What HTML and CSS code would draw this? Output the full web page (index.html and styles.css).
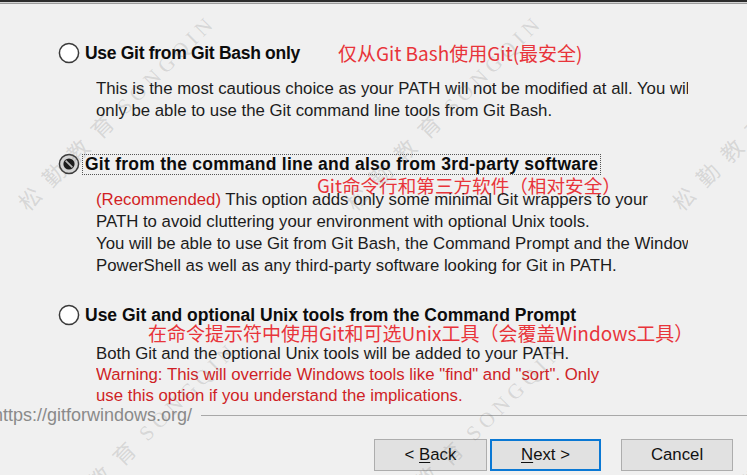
FILE: index.html
```html
<!DOCTYPE html>
<html lang="en">
<head>
<meta charset="utf-8">
<title>Git Setup - Adjusting your PATH environment</title>
<link rel="stylesheet" href="styles.css">
</head>
<body>
<div class="edge"></div>
<main class="content">
  <section class="option first">
    <div class="opt-head">
      <svg class="radio" width="22" height="22" viewBox="0 0 22 22"><circle cx="11" cy="11" r="9.6" fill="#fff" stroke="#3a3a3a" stroke-width="1.5"/></svg>
      <span class="label l1">Use Git from Git Bash only</span>
      <span class="note inline-note">仅从Git Bash使用Git(最安全)</span>
    </div>
    <div class="desc d1">
      <div class="line">This is the most cautious choice as your PATH will not be modified at all. You will</div>
      <div class="line">only be able to use the Git command line tools from Git Bash.</div>
    </div>
  </section>

  <section class="option second">
    <div class="opt-head">
      <svg class="radio" width="22" height="22" viewBox="0 0 22 22"><circle cx="11" cy="11" r="9.6" fill="#d4d4d4" stroke="#3a3a3a" stroke-width="1.5"/><circle cx="11" cy="11" r="5.6" fill="#1c1c1c"/><line x1="7.6" y1="7.6" x2="14.4" y2="14.4" stroke="#b8b8b8" stroke-width="1.7"/></svg>
      <span class="label l2 focused">Git from the command line and also from 3rd-party software</span>
    </div>
    <div class="note block-note n2">Git命令行和第三方软件（相对安全）</div>
    <div class="desc d2">
      <div class="line"><span class="rec">(Recommended)</span> This option adds only some minimal Git wrappers to your</div>
      <div class="line">PATH to avoid cluttering your environment with optional Unix tools.</div>
      <div class="line">You will be able to use Git from Git Bash, the Command Prompt and the Windows</div>
      <div class="line">PowerShell as well as any third-party software looking for Git in PATH.</div>
    </div>
  </section>

  <section class="option third">
    <div class="opt-head">
      <svg class="radio" width="22" height="22" viewBox="0 0 22 22"><circle cx="11" cy="11" r="9.6" fill="#fff" stroke="#3a3a3a" stroke-width="1.5"/></svg>
      <span class="label">Use Git and optional Unix tools from the Command Prompt</span>
    </div>
    <div class="note block-note n3">在命令提示符中使用Git和可选Unix工具（会覆盖Windows工具）</div>
    <div class="desc d3">
      <div class="line">Both Git and the optional Unix tools will be added to your PATH.</div>
      <div class="line warn">Warning: This will override Windows tools like "find" and "sort". Only</div>
      <div class="line warn">use this option if you understand the implications.</div>
    </div>
  </section>
</main>

<div class="url-row">
  <span class="url">https://gitforwindows.org/</span>
  <span class="rule"></span>
</div>

<div class="buttons">
  <button class="btn">&lt; <u>B</u>ack</button>
  <button class="btn primary"><u>N</u>ext &gt;</button>
  <button class="btn cancel">Cancel</button>
</div>

<div class="wm w1">松勤教育<span class="wm-lat">SONGQIN</span></div>
<div class="wm w2">松勤教育<span class="wm-lat">SONGQIN</span></div>
<div class="wm w3">松勤教育<span class="wm-lat">SONGQIN</span></div>
<div class="wm w4">松勤教育<span class="wm-lat">SONGQIN</span></div>
<div class="wm w5">松勤教育<span class="wm-lat">SONGQIN</span></div>
<div class="wm w6">松勤教育<span class="wm-lat">SONGQIN</span></div>
</body>
</html>
```

FILE: styles.css
```css
* { box-sizing: border-box; }

html, body {
  margin: 0;
  padding: 0;
}

body {
  width: 747px;
  height: 475px;
  overflow: hidden;
  position: relative;
  background: #f0f0f0;
  font-family: "Liberation Sans", Arial, sans-serif;
  color: #1e1e1e;
}

.edge {
  height: 4px;
  border-top: 2px solid #2c2c2c;
  border-bottom: 1px solid #9c9c9c;
  background: #d4d4d4;
}

.content {
  padding-top: 38px;
  padding-left: 58px;
}

.opt-head {
  display: flex;
  align-items: center;
  height: 22px;
  gap: 2px;
  white-space: nowrap;
}

.radio {
  flex: none;
  display: block;
}

.label {
  font-weight: bold;
  font-size: 17.5px;
  line-height: 19px;
  color: #0c0c0c;
  padding: 0 2px;
  border: 1px dotted transparent;
}

.l1 { letter-spacing: -0.3px; }
.l2 { letter-spacing: 0.25px; }

.label.focused {
  border-color: #555;
}

.note {
  font-family: "Noto Sans CJK SC", "Noto Sans", sans-serif;
  color: #e8343a;
  font-size: 19px;
  line-height: 22px;
  white-space: nowrap;
}

.inline-note {
  margin-left: 33px;
}

.desc {
  margin-left: 38px;
  width: 592px;
  overflow: hidden;
  font-size: 16.8px;
  line-height: 22px;
  color: #1c1c1c;
}

.line {
  white-space: nowrap;
}

.d1 { margin-top: 14px; }

.second { margin-top: 31px; }

.n2 {
  margin-left: 259px;
  font-size: 18.6px;
  margin-top: -1px;
}

.d2 { margin-top: -7px; }

.rec { color: #d21f24; }

.third { margin-top: 27px; }

.n3 {
  margin-left: 90px;
  margin-top: -4px;
}

.d3 {
  margin-top: -1px;
  line-height: 21px;
}

.warn { color: #cf1f26; }

.url-row {
  display: flex;
  align-items: center;
  height: 22px;
  margin-top: -2px;
  margin-left: -7px;
}

.url {
  font-size: 18px;
  color: #8a8a8a;
  white-space: nowrap;
}

.rule {
  flex: 1;
  height: 1px;
  margin-left: 9px;
  background: #a8a8a8;
}

.buttons {
  display: flex;
  justify-content: flex-end;
  margin-top: 13px;
  padding-right: 14px;
}

.btn {
  width: 113px;
  height: 32px;
  margin: 0;
  padding: 0;
  background: #e1e1e1;
  border: 1px solid #adadad;
  font-family: "Liberation Sans", Arial, sans-serif;
  font-size: 16.8px;
  color: #111;
}

.btn u { text-decoration-thickness: 1px; text-underline-offset: 2px; }

.btn.primary {
  width: 111px;
  margin-left: 3px;
  border: 2px solid #0a78d4;
}

.btn.cancel {
  width: 112px;
  margin-left: 20px;
}

.wm {
  position: absolute;
  font-family: "Noto Sans CJK SC", "Noto Sans", sans-serif;
  font-size: 22px;
  line-height: 24px;
  letter-spacing: 12px;
  color: rgba(110, 110, 110, 0.2);
  white-space: nowrap;
  transform: rotate(-45deg);
  transform-origin: 0 50%;
  pointer-events: none;
}

.wm-lat {
  font-family: "Liberation Serif", serif;
  letter-spacing: 5px;
  font-size: 21px;
  margin-left: 2px;
}

.w1 { left: 22px; top: 193px; }
.w2 { left: 349px; top: 193px; }
.w3 { left: 676px; top: 193px; }
.w4 { left: 44px; top: 520px; }
.w5 { left: 371px; top: 520px; }
.w6 { left: 698px; top: 520px; }
```
